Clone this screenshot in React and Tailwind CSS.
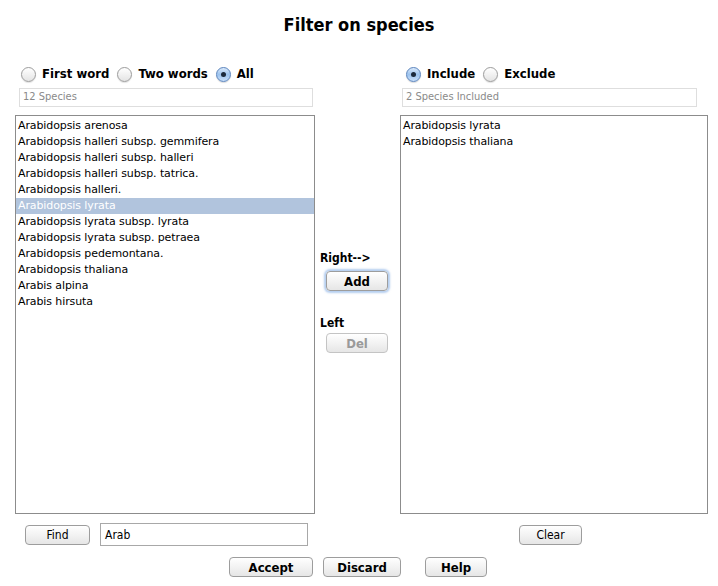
import { useState } from 'react';

const species = [
    'Arabidopsis arenosa',
    'Arabidopsis halleri subsp. gemmifera',
    'Arabidopsis halleri subsp. halleri',
    'Arabidopsis halleri subsp. tatrica.',
    'Arabidopsis halleri.',
    'Arabidopsis lyrata',
    'Arabidopsis lyrata subsp. lyrata',
    'Arabidopsis lyrata subsp. petraea',
    'Arabidopsis pedemontana.',
    'Arabidopsis thaliana',
    'Arabis alpina',
    'Arabis hirsuta',
];

const included = ['Arabidopsis lyrata', 'Arabidopsis thaliana'];

const condensed = 'font-["DejaVu_Sans_Condensed","DejaVu_Sans",sans-serif]';
const listFont = 'font-["DejaVu_Sans",sans-serif]';

function Radio({ label, checked, onClick }) {
    return (
        <button onClick={onClick} className="flex items-center gap-[6px] mr-[8px]">
            {checked ? (
                <span className="w-[15px] h-[15px] rounded-full border border-[#5a84bd] bg-gradient-to-b from-[#dbeafb] via-[#9cc3ee] to-[#c9e0fa] flex items-center justify-center shadow-[0_1px_1px_rgba(0,0,0,0.15)]">
                    <span className="w-[5px] h-[5px] rounded-full bg-[#1c2a3c]" />
                </span>
            ) : (
                <span className="w-[15px] h-[15px] rounded-full border border-[#9c9c9c] bg-gradient-to-b from-[#ffffff] to-[#e4e4e4] shadow-[0_1px_1px_rgba(0,0,0,0.12)]" />
            )}
            <span className={`${condensed} font-bold text-[13px] text-black`}>{label}</span>
        </button>
    );
}

function Btn({ children, className = '', bold, disabled, focus }) {
    return (
        <button
            disabled={disabled}
            className={`h-[20px] rounded-[4px] border bg-gradient-to-b from-[#ffffff] to-[#e6e6e6] text-[12px] leading-none flex items-center justify-center ${condensed}
                ${bold ? 'font-bold text-[13px]' : ''}
                ${disabled ? 'text-[#9a9a9a] border-[#c4c4c4]' : 'text-black border-[#9d9d9d]'}
                ${focus ? 'border-[#6f9fd8] shadow-[0_0_2px_2px_rgba(120,165,225,0.55)]' : ''}
                ${className}`}
        >
            {children}
        </button>
    );
}

export default function App() {
    const [mode, setMode] = useState('all');
    const [inc, setInc] = useState(true);
    const [selected, setSelected] = useState('Arabidopsis lyrata');

    return (
        <div className="w-[718px] h-[586px] bg-white flex flex-col overflow-hidden">
            <div className={`h-[47px] flex items-center justify-center pt-[2px] ${condensed} font-bold text-[18px] text-black`}>
                Filter on species
            </div>

            <div className="flex pl-[15px]">
                {/* Left column */}
                <div className="w-[300px] flex flex-col">
                    <div className="h-[18px] mt-[18px] pl-[6px] flex items-center">
                        <Radio label="First word" checked={mode === 'first'} onClick={() => setMode('first')} />
                        <Radio label="Two words" checked={mode === 'two'} onClick={() => setMode('two')} />
                        <Radio label="All" checked={mode === 'all'} onClick={() => setMode('all')} />
                    </div>
                    <div className={`ml-[4px] mt-[5px] w-[294px] h-[19px] border border-[#dedede] px-[3px] flex items-center text-[11px] text-[#8a8a8a] ${condensed}`}>
                        12 Species
                    </div>
                    <div className={`mt-[8px] h-[399px] border border-[#8c8c8c] pt-[2px] ${listFont}`}>
                        {species.map((s) => (
                            <div
                                key={s}
                                onClick={() => setSelected(s)}
                                className={`h-[16px] pl-[2px] flex items-center text-[11px] tracking-[-0.1px] ${selected === s ? 'bg-[#b1c4dd] text-white' : 'text-black'}`}
                            >
                                {s}
                            </div>
                        ))}
                    </div>
                </div>

                {/* Middle column */}
                <div className="w-[85px] flex flex-col pl-[5px] pt-[204px]">
                    <div className={`${condensed} font-bold text-[12px] text-black leading-[14px]`}>Right--&gt;</div>
                    <Btn bold focus className="w-[62px] ml-[6px] mt-[6px]">Add</Btn>
                    <div className={`${condensed} font-bold text-[12px] text-black leading-[14px] mt-[25px]`}>Left</div>
                    <Btn bold disabled className="w-[62px] ml-[6px] mt-[3px]">Del</Btn>
                </div>

                {/* Right column */}
                <div className="w-[308px] flex flex-col">
                    <div className="h-[18px] mt-[18px] pl-[6px] flex items-center">
                        <Radio label="Include" checked={inc} onClick={() => setInc(true)} />
                        <Radio label="Exclude" checked={!inc} onClick={() => setInc(false)} />
                    </div>
                    <div className={`ml-[2px] mt-[5px] w-[295px] h-[19px] border border-[#dedede] px-[3px] flex items-center text-[11px] text-[#8a8a8a] ${condensed}`}>
                        2 Species Included
                    </div>
                    <div className={`mt-[8px] h-[399px] border border-[#8c8c8c] pt-[2px] ${listFont}`}>
                        {included.map((s) => (
                            <div key={s} className="h-[16px] pl-[2px] flex items-center text-[11px] tracking-[-0.1px] text-black">
                                {s}
                            </div>
                        ))}
                    </div>
                </div>
            </div>

            {/* Find row */}
            <div className="flex items-center mt-[9px] h-[23px]">
                <Btn className="w-[65px] ml-[25px]">Find</Btn>
                <div className={`ml-[10px] w-[208px] h-[23px] border border-[#a8a8a8] px-[4px] flex items-center text-[12px] text-black ${condensed}`}>
                    Arab
                </div>
                <Btn className="w-[63px] ml-[211px]">Clear</Btn>
            </div>

            {/* Action buttons */}
            <div className="flex mt-[11px] pl-[229px]">
                <Btn bold className="w-[84px]">Accept</Btn>
                <Btn bold className="w-[78px] ml-[10px]">Discard</Btn>
                <Btn bold className="w-[62px] ml-[24px]">Help</Btn>
            </div>
        </div>
    );
}
